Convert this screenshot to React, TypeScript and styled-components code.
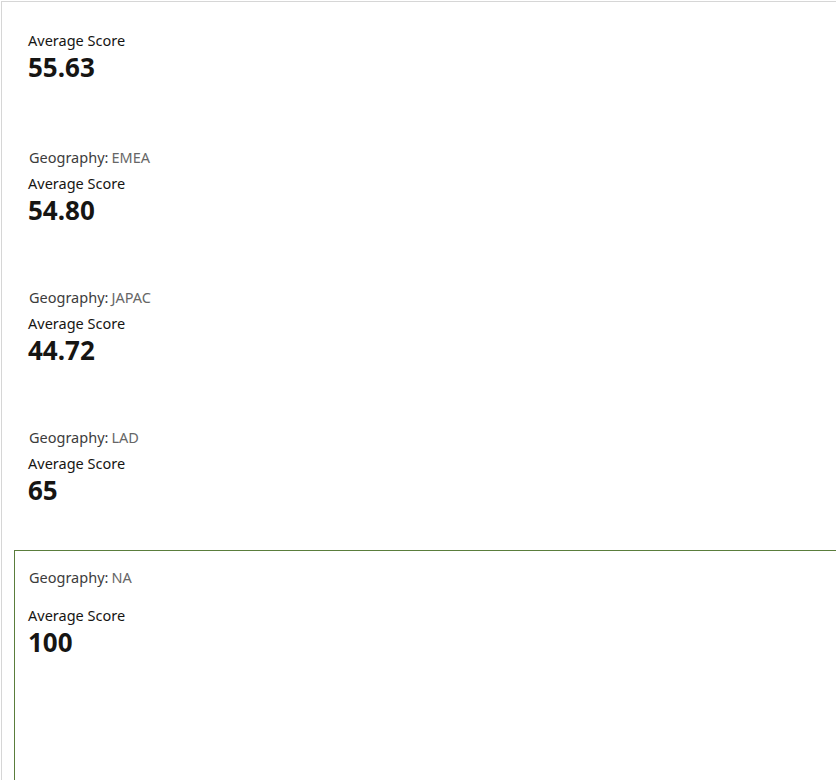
import React from "react";
import styled, { createGlobalStyle } from "styled-components";

const GlobalStyle = createGlobalStyle`
  html, body {
    margin: 0;
    padding: 0;
    background: #fff;
  }
  body {
    font-family: "Noto Sans", "Liberation Sans", sans-serif;
    color: #161513;
  }
`;

const Frame = styled.div`
  margin: 1px 0 0 1px;
  height: 779px;
  box-sizing: border-box;
  border-top: 1px solid #d6d6d6;
  border-left: 1px solid #d6d6d6;
  overflow: hidden;
`;

const List = styled.div`
  display: flex;
  flex-direction: column;
  padding-left: 12px;
`;

const Card = styled.div<{ $selected?: boolean; $summary?: boolean }>`
  box-sizing: border-box;
  flex: none;
  height: ${({ $summary, $selected }) =>
    $summary ? 128 : $selected ? 260 : 140}px;
  width: calc(100% + 40px);
  padding: ${({ $summary, $selected }) =>
    $summary ? "25px 14px 0" : $selected ? "13px 13px 0" : "14px 14px 0"};
  border: ${({ $selected }) => ($selected ? "1px solid #5a7d3c" : "none")};
`;

const GeoRow = styled.div`
  display: flex;
  gap: 3px;
  font-size: 14.5px;
  line-height: 26px;
  padding-left: 1px;
`;

const GeoKey = styled.span`
  color: #3c3c3c;
`;

const GeoValue = styled.span`
  color: #666;
`;

const MetricLabel = styled.div<{ $spaced?: boolean }>`
  font-size: 14.5px;
  line-height: 26px;
  margin-top: ${({ $spaced }) => ($spaced ? "12px" : "0")};
  color: #161513;
`;

const MetricValue = styled.div`
  font-size: 26px;
  font-weight: 700;
  line-height: 28px;
  color: #161513;
`;

type Item = { geo?: string; score: string; selected?: boolean };

const items: Item[] = [
  { score: "55.63" },
  { geo: "EMEA", score: "54.80" },
  { geo: "JAPAC", score: "44.72" },
  { geo: "LAD", score: "65" },
  { geo: "NA", score: "100", selected: true },
];

export default function App() {
  return (
    <>
      <GlobalStyle />
      <Frame>
        <List>
          {items.map((item, i) => (
            <Card key={i} $summary={!item.geo} $selected={item.selected}>
              {item.geo && (
                <GeoRow>
                  <GeoKey>Geography:</GeoKey>
                  <GeoValue>{item.geo}</GeoValue>
                </GeoRow>
              )}
              <MetricLabel $spaced={item.selected}>Average Score</MetricLabel>
              <MetricValue>{item.score}</MetricValue>
            </Card>
          ))}
        </List>
      </Frame>
    </>
  );
}
